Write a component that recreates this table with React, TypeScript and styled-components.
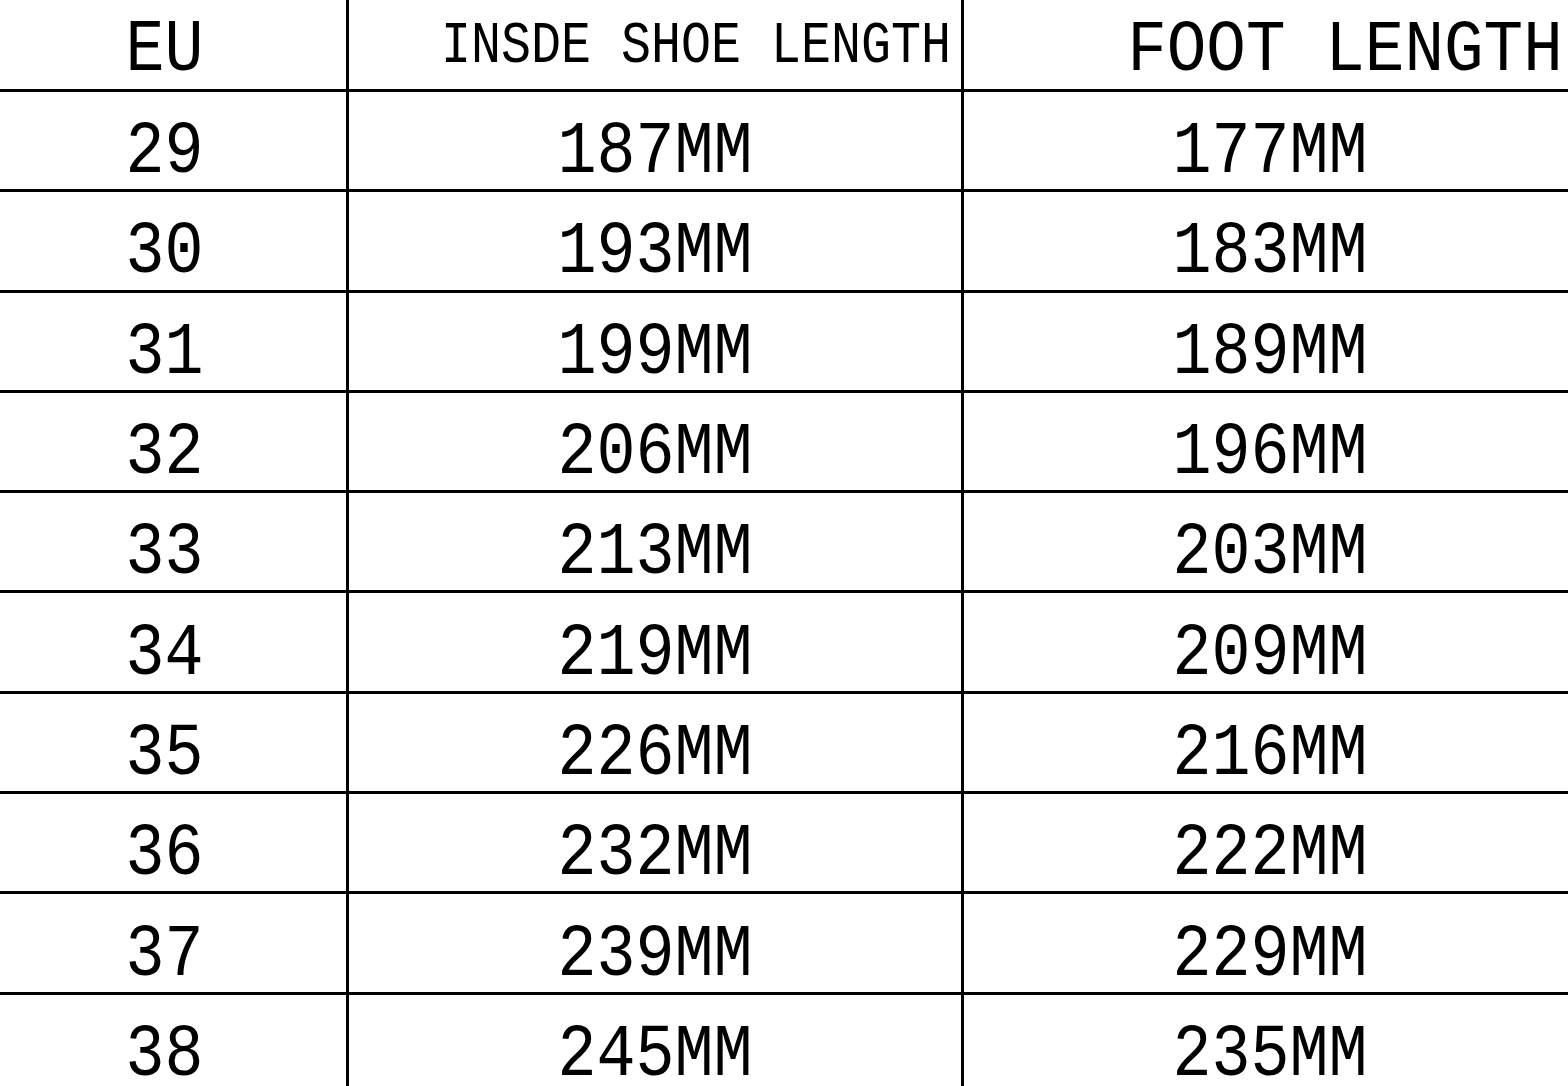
import React from "react";
import styled, { createGlobalStyle } from "styled-components";

const Global = createGlobalStyle`
  html, body {
    margin: 0;
    padding: 0;
    background: #ffffff;
    overflow: hidden;
  }
  body {
    width: 1568px;
    height: 1086px;
  }
`;

const Table = styled.div`
  display: flex;
  flex-direction: column;
  width: 1593px;
  margin-left: -17px;
  font-family: "Liberation Mono", "Courier New", monospace;
  color: #000;
`;

const Row = styled.div<{ $header?: boolean }>`
  display: grid;
  grid-template-columns: 363px 615px 615px;
  box-sizing: border-box;
  height: ${(p) => (p.$header ? "89px" : "100.3px")};
  border-top: ${(p) => (p.$header ? "none" : "3px solid #000")};
  flex-shrink: 0;
`;

const Cell = styled.div<{ $divider?: boolean; $shift?: number; $drop?: number }>`
  display: flex;
  align-items: center;
  justify-content: center;
  box-sizing: border-box;
  border-left: ${(p) => (p.$divider ? "3px solid #000" : "none")};
  padding-left: ${(p) => (p.$shift ? p.$shift * 2 : 0)}px;
  padding-top: ${(p) => (p.$drop ? p.$drop * 2 : 0)}px;
  white-space: nowrap;
  overflow: visible;
`;

const Glyphs = styled.span<{ $size: number; $stretch: number }>`
  display: inline-block;
  font-size: ${(p) => p.$size}px;
  line-height: 1;
  transform: scaleY(${(p) => p.$stretch});
  transform-origin: center;
  letter-spacing: 0;
`;

const rows: [string, string, string][] = [
  ["29", "187MM", "177MM"],
  ["30", "193MM", "183MM"],
  ["31", "199MM", "189MM"],
  ["32", "206MM", "196MM"],
  ["33", "213MM", "203MM"],
  ["34", "219MM", "209MM"],
  ["35", "226MM", "216MM"],
  ["36", "232MM", "222MM"],
  ["37", "239MM", "229MM"],
  ["38", "245MM", "235MM"],
];

export default function App() {
  return (
    <>
      <Global />
      <Table>
        <Row $header>
          <Cell $drop={7}>
            <Glyphs $size={65} $stretch={1.14}>EU</Glyphs>
          </Cell>
          <Cell $divider $shift={41} $drop={2}>
            <Glyphs $size={50} $stretch={1.17}>INSDE SHOE LENGTH</Glyphs>
          </Cell>
          <Cell $divider $shift={75} $drop={6}>
            <Glyphs $size={66} $stretch={1.1}>FOOT LENGTH</Glyphs>
          </Cell>
        </Row>
        {rows.map(([eu, inside, foot]) => (
          <Row key={eu}>
            <Cell $drop={13}>
              <Glyphs $size={65} $stretch={1.14}>{eu}</Glyphs>
            </Cell>
            <Cell $divider $drop={13}>
              <Glyphs $size={65} $stretch={1.14}>{inside}</Glyphs>
            </Cell>
            <Cell $divider $drop={13}>
              <Glyphs $size={65} $stretch={1.14}>{foot}</Glyphs>
            </Cell>
          </Row>
        ))}
      </Table>
    </>
  );
}
